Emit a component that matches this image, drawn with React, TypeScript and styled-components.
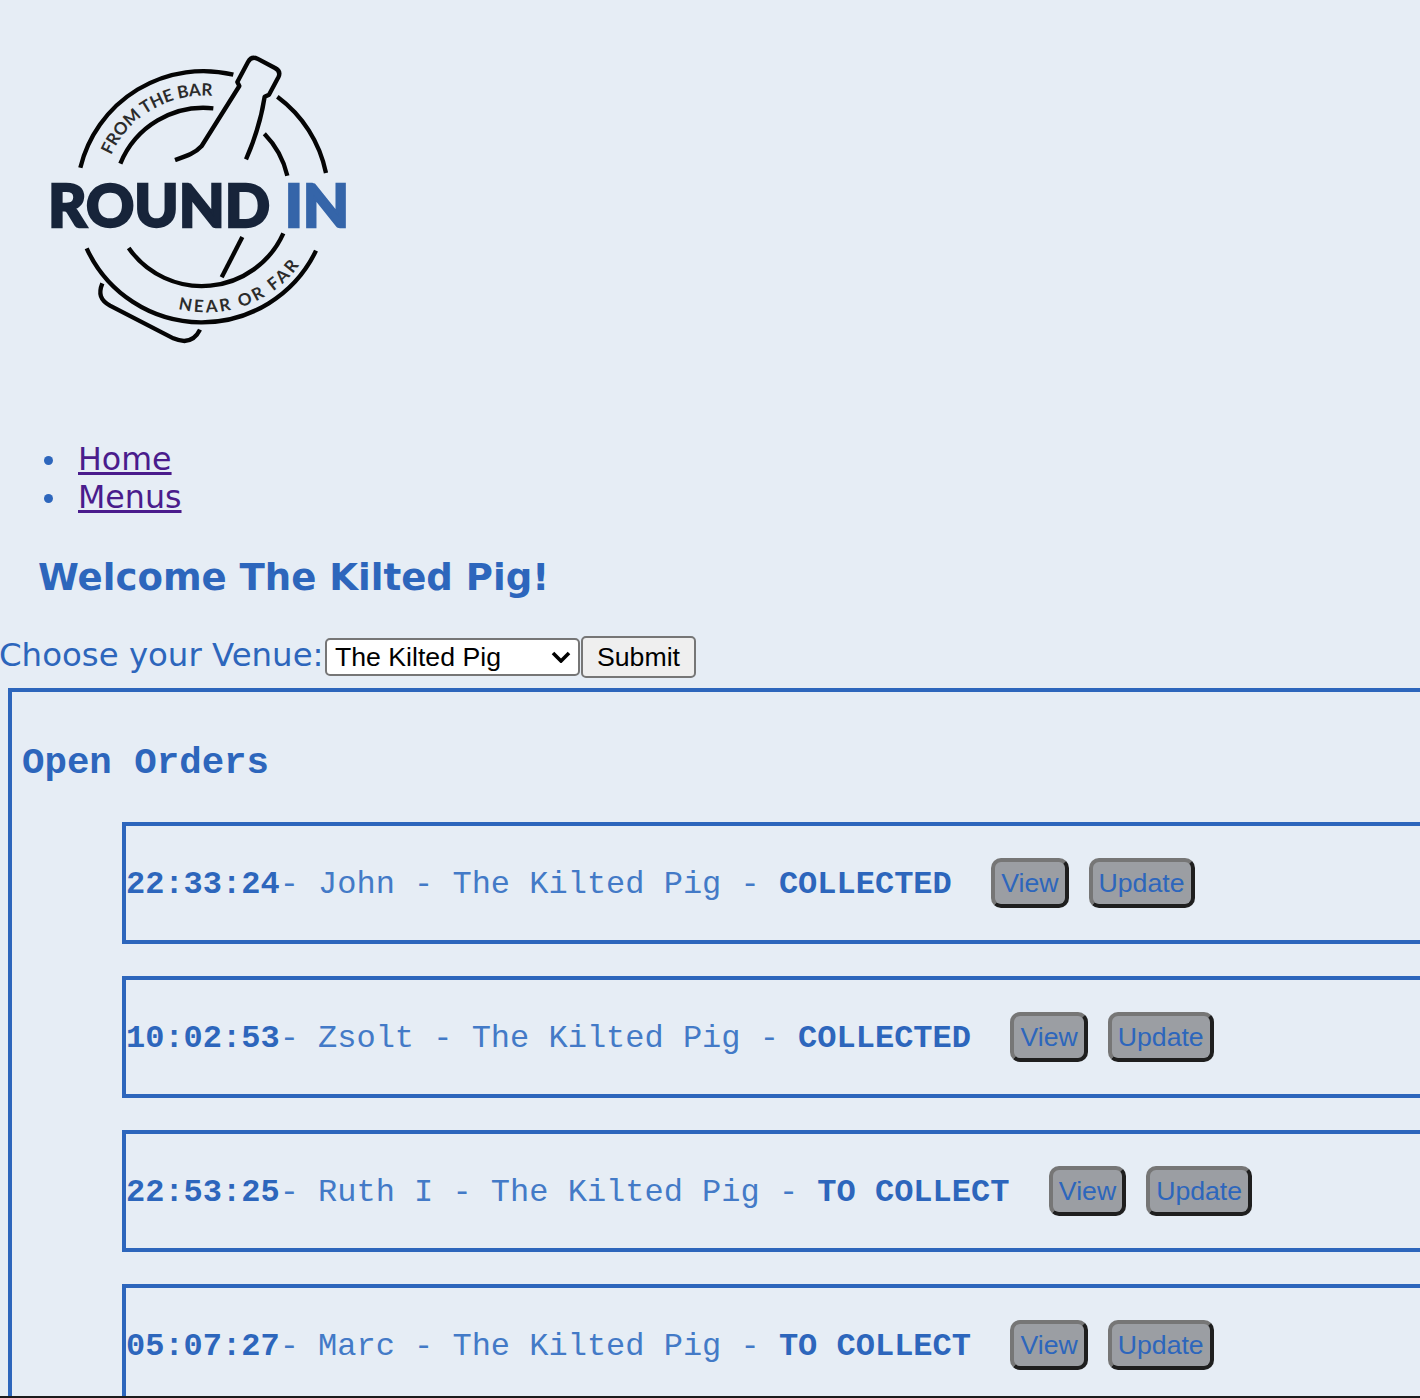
import styled, { createGlobalStyle } from "styled-components";

const blue = "#2d66bc";

const chevron =
  "data:image/svg+xml,%3Csvg xmlns='http://www.w3.org/2000/svg' viewBox='0 0 20 12'%3E%3Cpath d='M2 2l8 8 8-8' fill='none' stroke='%23000' stroke-width='3.6'/%3E%3C/svg%3E";

const GlobalStyle = createGlobalStyle`
  html, body {
    margin: 0;
    padding: 0;
    height: 1398px;
    overflow: hidden;
    background-color: #e6edf5;
  }
`;

const Page = styled.div`
  width: 1420px;
  height: 1398px;
  overflow: hidden;
  color: ${blue};
  font-family: "DejaVu Sans", Verdana, sans-serif;
  font-size: 32px;
`;

const Header = styled.header`
  padding: 40px 0 0 30px;
  height: 400px;
  box-sizing: border-box;
`;

const Logo = styled.svg`
  display: block;
  width: 340px;
  height: 320px;
`;

const Nav = styled.ul`
  margin: 0;
  padding: 40px 0 0 78px;
  list-style: none;
  font-size: 31.7px;
  line-height: 38px;
`;

const NavItem = styled.li`
  position: relative;
  &::before {
    content: "";
    position: absolute;
    left: -34px;
    top: 16px;
    width: 9px;
    height: 9px;
    border-radius: 50%;
    background: ${blue};
  }
`;

const NavLink = styled.a`
  color: #4a1c8c;
  text-decoration: underline;
`;

const Welcome = styled.h2`
  margin: 39px 0 0 38px;
  font-size: 37.1px;
  line-height: 46px;
  font-weight: 700;
`;

const VenueForm = styled.form`
  display: flex;
  align-items: center;
  height: 42px;
  margin-top: 35px;
`;

const VenueLabel = styled.label`
  width: 326px;
  margin: -4px 0 0 -1px;
  white-space: nowrap;
  font-size: 32.4px;
`;

const VenueSelect = styled.select`
  appearance: none;
  width: 255px;
  height: 38px;
  padding: 0 8px;
  box-sizing: border-box;
  background: #fff url("${chevron}") no-repeat right 7px center / 20px 12px;
  color: #000;
  border: 2px solid #767676;
  border-radius: 5px;
  font-family: "Liberation Sans", Arial, sans-serif;
  font-size: 26.67px;
`;

const SubmitButton = styled.button`
  width: 115px;
  height: 42px;
  margin-left: 1px;
  padding: 0;
  background: #efefef;
  color: #000;
  border: 2px solid #767676;
  border-radius: 5px;
  font-family: "Liberation Sans", Arial, sans-serif;
  font-size: 26.67px;
`;

const OrdersPanel = styled.section`
  width: 1600px;
  margin: 10px 0 0 8px;
  padding: 0 0 32px 10px;
  border: 4px solid ${blue};
  font-family: "Liberation Mono", "Courier New", monospace;
`;

const PanelTitle = styled.h3`
  margin: 0;
  padding: 49px 0 37px;
  font-size: 37.44px;
  line-height: 44px;
  font-weight: 700;
`;

const OrderRow = styled.div`
  display: flex;
  align-items: center;
  height: 122px;
  box-sizing: border-box;
  margin: 0 0 32px 100px;
  border: 4px solid ${blue};
  white-space: pre;
`;

const OrderText = styled.span`
  padding-top: 2px;
  color: #437ac7;
`;

const OrderTime = styled.b`
  font-weight: 700;
  color: ${blue};
`;

const OrderStatus = styled.b`
  font-weight: 700;
  color: ${blue};
  margin-right: 39.5px;
`;

const RowButton = styled.button`
  height: 50px;
  margin-right: 20px;
  padding: 0 6px;
  box-sizing: border-box;
  background: #9b9ea3;
  color: ${blue};
  border: 4px solid;
  border-color: #767676 #1f1f1f #1f1f1f #767676;
  border-radius: 10px;
  font-family: "Liberation Sans", Arial, sans-serif;
  font-size: 26.67px;
`;

const WindowEdge = styled.div`
  position: absolute;
  left: 0;
  top: 1396px;
  width: 1420px;
  height: 2px;
  background: #1c1c1c;
`;

const orders = [
  { time: "22:33:24", name: "John", status: "COLLECTED" },
  { time: "10:02:53", name: "Zsolt", status: "COLLECTED" },
  { time: "22:53:25", name: "Ruth I", status: "TO COLLECT" },
  { time: "05:07:27", name: "Marc", status: "TO COLLECT" },
];

function RoundInLogo() {
  return (
    <Logo viewBox="0 0 1020 960" fill="none">
      <defs>
        <path id="from-arc" d="M243 346A305 305 0 0 1 562 170" />
        <path id="near-arc" d="M444 806A342 342 0 0 0 830 640" />
      </defs>
      <g stroke="#050505" strokeWidth="13" strokeLinecap="butt">
        <path d="M151 383A380 380 0 0 1 610 104" />
        <path d="M742 170A378 378 0 0 1 888 399" />
        <path d="M170 625A380 380 0 0 0 858 632" />
        <path d="M271 371A270 270 0 0 1 550 205" />
        <path d="M703 281A265 265 0 0 1 772 407" />
        <path d="M296 624A268 268 0 0 0 760 580" />
        <path
          d="M435 360C470 348 495 340 515 318L628 138L622 126L654 66Q664 48 682 56L735 84Q754 94 745 112L717 164L704 170C695 230 680 285 648 358"
          strokeLinejoin="round"
        />
        <path d="M637 591L575 712" />
        <path d="M217 730C205 760 210 780 240 797L430 895C470 912 495 900 510 869" />
      </g>
      <g fill="#2b2b2b" fontFamily="Lato, sans-serif" fontSize="51" fontWeight="700">
        <text>
          <textPath href="#from-arc">FROM THE BAR</textPath>
        </text>
        <text letterSpacing="8">
          <textPath href="#near-arc">NEAR OR FAR</textPath>
        </text>
      </g>
      <g fontFamily="Lato, sans-serif" fontSize="178" fontWeight="900" strokeWidth="7">
        <text x="54" y="560" fill="#17243a" stroke="#17243a" textLength="666" lengthAdjust="spacingAndGlyphs">
          ROUND
        </text>
        <text x="764" y="560" fill="#3565a9" stroke="#3565a9" textLength="194" lengthAdjust="spacingAndGlyphs">
          IN
        </text>
      </g>
    </Logo>
  );
}

function App() {
  return (
    <Page>
      <GlobalStyle />
      <Header>
        <RoundInLogo />
      </Header>
      <Nav>
        <NavItem>
          <NavLink href="#">Home</NavLink>
        </NavItem>
        <NavItem>
          <NavLink href="#">Menus</NavLink>
        </NavItem>
      </Nav>
      <Welcome>Welcome The Kilted Pig!</Welcome>
      <VenueForm>
        <VenueLabel>Choose your Venue:</VenueLabel>
        <VenueSelect defaultValue="The Kilted Pig">
          <option>The Kilted Pig</option>
        </VenueSelect>
        <SubmitButton type="button">Submit</SubmitButton>
      </VenueForm>
      <OrdersPanel>
        <PanelTitle>Open Orders</PanelTitle>
        {orders.map((order) => (
          <OrderRow key={order.time}>
            <OrderText>
              <OrderTime>{order.time}</OrderTime>
              {`- ${order.name} - The Kilted Pig - `}
              <OrderStatus>{order.status}</OrderStatus>
            </OrderText>
            <RowButton type="button">View</RowButton>
            <RowButton type="button">Update</RowButton>
          </OrderRow>
        ))}
      </OrdersPanel>
      <WindowEdge />
    </Page>
  );
}

export default App;
